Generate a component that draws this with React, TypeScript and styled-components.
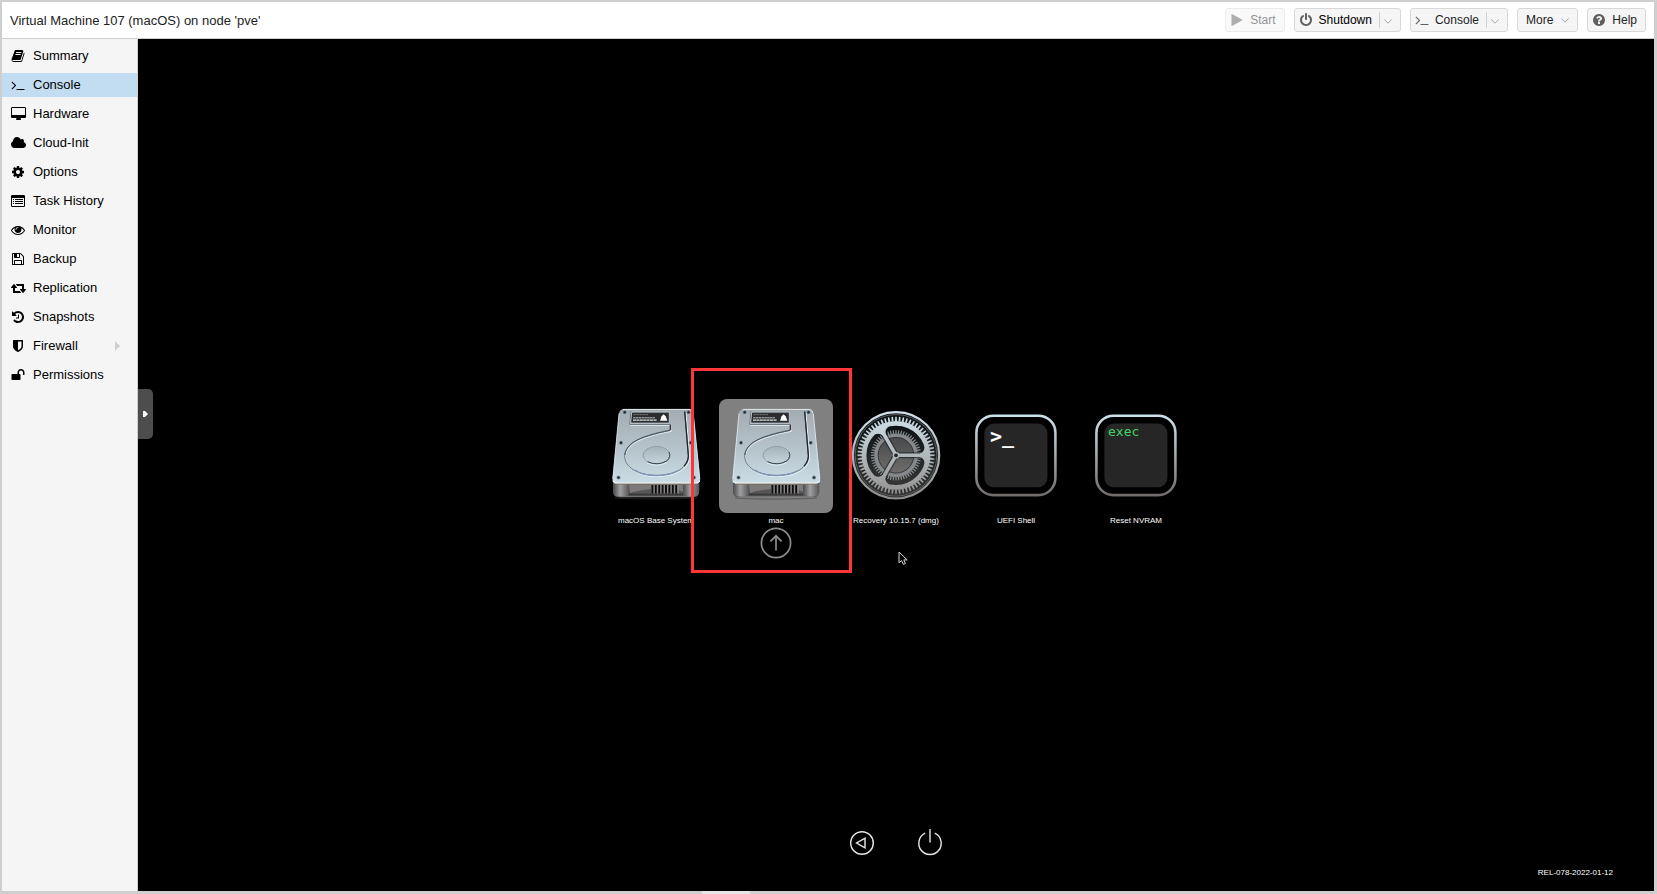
import React from "react";
import styled, { createGlobalStyle, css } from "styled-components";

const GlobalStyle = createGlobalStyle`
  *, *::before, *::after { box-sizing: border-box; }
  body {
    margin: 0;
    background: #cfcfcf;
    font-family: "Liberation Sans", Arial, Helvetica, sans-serif;
    font-size: 13px;
    color: #000;
  }
  button { font: inherit; color: inherit; margin: 0; padding: 0; border: 0; background: none; cursor: pointer; }
  svg { display: block; flex: none; }
`;

/* ---------- icon glyphs, drawn on a 1792 unit grid ---------- */

type GlyphDef = { w?: number; d: string };

const glyphs = {
  book: {
    d: "M1703 478q40 57 18 129l-275 906q-19 64-76.5 107.5t-122.5 43.5h-923q-77 0-148.5-53.5t-99.5-131.5q-24-67-2-127 0-4 3-27t4-37q1-8-3-21.5t-3-19.5q2-11 8-21t16.5-23.5 16.5-23.5q23-38 45-91.5t30-91.5q3-10 .5-30t-.5-28q3-11 17-28t17-23q21-36 42-92t25-90q1-9-2.5-32t.5-28q4-13 22-30.5t22-22.5q19-26 42.5-84.5t27.5-96.5q1-8-3-25.5t-2-26.5q2-8 9-18t18-23 17-21q8-12 16.5-30.5t15-35 16-36 19.5-32 26.5-23.5 36-11.5 47.5 5.5l-1 3q38-9 51-9h761q74 0 114 56t18 130l-274 906q-36 119-71.5 153.5t-128.5 34.5h-869q-27 0-38 15-11 16-1 43 24 70 144 70h923q29 0 56-15.5t35-41.5l300-987q7-22 5-57 38 15 59 43zm-1064 2q-4 13 2 22.5t20 9.5h608q13 0 25.5-9.5t16.5-22.5l21-64q4-13-2-22.5t-20-9.5h-608q-13 0-25.5 9.5t-16.5 22.5zm-83 256q-4 13 2 22.5t20 9.5h608q13 0 25.5-9.5t16.5-22.5l21-64q4-13-2-22.5t-20-9.5h-608q-13 0-25.5 9.5t-16.5 22.5z",
  },
  terminal: {
    d: "M649 983l-466 466q-10 10-23 10t-23-10l-50-50q-10-10-10-23t10-23l393-393-393-393q-10-10-10-23t10-23l50-50q10-10 23-10t23 10l466 466q10 10 10 23t-10 23zm1079 457v64q0 14-9 23t-23 9h-960q-14 0-23-9t-9-23v-64q0-14 9-23t23-9h960q14 0 23 9t9 23z",
  },
  desktop: {
    w: 1920,
    d: "M1792 992v-832q0-13-9.5-22.5t-22.5-9.5h-1600q-13 0-22.5 9.5t-9.5 22.5v832q0 13 9.5 22.5t22.5 9.5h1600q13 0 22.5-9.5t9.5-22.5zm128-832v1088q0 66-47 113t-113 47h-544q0 37 16 77.5t32 71 16 43.5q0 26-19 45t-45 19h-512q-26 0-45-19t-19-45q0-14 16-44t32-70 16-78h-544q-66 0-113-47t-47-113v-1088q0-66 47-113t113-47h1600q66 0 113 47t47 113z",
  },
  cloud: {
    w: 1920,
    d: "M1920 1152q0 159-112.5 271.5t-271.5 112.5h-1088q-185 0-316.5-131.5t-131.5-316.5q0-132 71-241.5t187-163.5q-2-28-2-43 0-212 150-362t362-150q158 0 286.5 88t187.5 230q70-62 166-62 106 0 181 75t75 181q0 75-41 138 129 30 213 134.5t84 239.5z",
  },
  cog: {
    d: "M1152 896q0-106-75-181t-181-75-181 75-75 181 75 181 181 75 181-75 75-181zm512-109v222q0 12-8 23t-20 13l-185 28q-19 54-39 91 35 50 107 138 10 12 10 25t-9 23q-27 37-99 108t-94 71q-12 0-26-9l-138-108q-44 23-91 38-16 136-29 186-7 28-36 28h-222q-14 0-24.5-8.5t-11.5-21.5l-28-184q-49-16-90-37l-141 107q-10 9-25 9-14 0-25-11-126-114-165-168-7-10-7-23 0-12 8-23 15-21 51-66.5t54-70.5q-27-50-41-99l-183-27q-13-2-21-12.5t-8-23.5v-222q0-12 8-23t19-13l186-28q14-46 39-92-40-57-107-138-10-12-10-24 0-10 9-23 26-36 98.5-107.5t94.5-71.5q13 0 26 10l138 107q44-23 91-38 16-136 29-186 7-28 36-28h222q14 0 24.5 8.5t11.5 21.5l28 184q49 16 90 37l142-107q9-9 24-9 13 0 25 10 129 119 165 170 7 8 7 22 0 12-8 23-15 21-51 66.5t-54 70.5q26 50 41 98l183 28q13 2 21 12.5t8 23.5z",
  },
  list: {
    d: "M160 128h1472q160 0 160 160v1216q0 160-160 160h-1472q-160 0-160-160v-1216q0-160 160-160zm0 384q-32 0-32 32v960q0 32 32 32h1472q32 0 32-32v-960q0-32-32-32zM256 640h128v128h-128zM512 640h1024v128h-1024zM256 896h128v128h-128zM512 896h1024v128h-1024zM256 1152h128v128h-128zM512 1152h1024v128h-1024z",
  },
  eye: {
    d: "M1664 960q-152-236-381-353 61 104 61 225 0 185-131.5 316.5t-316.5 131.5-316.5-131.5-131.5-316.5q0-121 61-225-229 117-381 353 133 205 333.5 326.5t434.5 121.5 434.5-121.5 333.5-326.5zm-720-384q0-20-14-34t-34-14q-125 0-214.5 89.5t-89.5 214.5q0 20 14 34t34 14 34-14 14-34q0-86 61-147t147-61q20 0 34-14t14-34zm848 384q0 34-20 69-140 230-376.5 368.5t-499.5 138.5-499.5-139-376.5-368q-20-35-20-69t20-69q140-229 376.5-368t499.5-139 499.5 139 376.5 368q20 35 20 69z",
  },
  floppy: {
    d: "M512 1536h768v-384h-768v384zm896 0h128v-896q0-14-10-38.5t-20-34.5l-281-281q-10-10-34-20t-39-10v416q0 40-28 68t-68 28h-576q-40 0-68-28t-28-68v-416h-128v1280h128v-416q0-40 28-68t68-28h832q40 0 68 28t28 68v416zm-384-928v-320q0-13-9.5-22.5t-22.5-9.5h-192q-13 0-22.5 9.5t-9.5 22.5v320q0 13 9.5 22.5t22.5 9.5h192q13 0 22.5-9.5t9.5-22.5zm640 32v928q0 40-28 68t-68 28h-1344q-40 0-68-28t-28-68v-1344q0-40 28-68t68-28h928q40 0 88 20t76 48l280 280q28 28 48 76t20 88z",
  },
  retweet: {
    w: 1920,
    d: "M1280 1504q0 13-9.5 22.5t-22.5 9.5h-960q-8 0-13.5-2t-9-7-5.5-8-3-11.5-1-11.5v-600h-192q-26 0-45-19t-19-45q0-24 15-41l320-384q19-22 49-22t49 22l320 384q15 17 15 41 0 26-19 45t-45 19h-192v384h576q16 0 25 11l160 192q7 10 7 21zm640-416q0 24-15 41l-320 384q-20 23-49 23t-49-23l-320-384q-15-17-15-41 0-26 19-45t45-19h192v-384h-576q-16 0-25-12l-160-192q-7-9-7-20 0-13 9.5-22.5t22.5-9.5h960q8 0 13.5 2t9 7 5.5 8 3 11.5 1 11.5v600h192q26 0 45 19t19 45z",
  },
  history: {
    d: "M1664 896q0 156-61 298t-164 245-245 164-298 61q-172 0-327-72.5t-264-204.5q-7-10-6.5-22.5t8.5-20.5l137-138q10-9 25-9 16 2 23 12 73 95 179 147t225 52q104 0 198.5-40.5t163.5-109.5 109.5-163.5 40.5-198.5-40.5-198.5-109.5-163.5-163.5-109.5-198.5-40.5q-98 0-188 35.5t-160 101.5l137 138q31 30 14 69-17 40-59 40h-448q-26 0-45-19t-19-45v-448q0-42 40-59 39-17 69 14l130 129q107-101 244.5-156.5t284.5-55.5q156 0 298 61t245 164 164 245 61 298zm-640-288v448q0 14-9 23t-23 9h-320q-14 0-23-9t-9-23v-64q0-14 9-23t23-9h224v-352q0-14 9-23t23-9h64q14 0 23 9t9 23z",
  },
  shield: {
    d: "M1344 960v-640h-448v1137q119-63 213-137 235-184 235-360zm192-768v768q0 86-33.5 170.5t-83 150-118 127.5-126.5 103-121 77.5-89.5 49.5-42.5 20q-12 6-26 6t-26-6q-16-7-42.5-20t-89.5-49.5-121-77.5-126.5-103-118-127.5-83-150-33.5-170.5v-768q0-26 19-45t45-19h1152q26 0 45 19t19 45z",
  },
  unlock: {
    d: "M1728 576v256q0 26-19 45t-45 19h-64q-26 0-45-19t-19-45v-256q0-106-75-181t-181-75-181 75-75 181v192h96q40 0 68 28t28 68v576q0 40-28 68t-68 28h-960q-40 0-68-28t-28-68v-576q0-40 28-68t68-28h672v-192q0-185 131.5-316.5t316.5-131.5 316.5 131.5 131.5 316.5z",
  },
  power: {
    d: "M1664 896q0 156-61 298t-164 245-245 164-298 61-298-61-245-164-164-245-61-298q0-182 80.5-343t226.5-270q43-32 95.5-25t83.5 50q32 42 24.5 94.5t-49.5 84.5q-98 74-151.5 181t-53.5 228q0 104 40.5 198.5t109.5 163.5 163.5 109.5 198.5 40.5 198.5-40.5 163.5-109.5 109.5-163.5 40.5-198.5q0-121-53.5-228t-151.5-181q-42-32-49.5-84.5t24.5-94.5q31-43 84-50t95 25q146 109 226.5 270t80.5 343zm-640-768v640q0 52-38 90t-90 38-90-38-38-90v-640q0-52 38-90t90-38 90 38 38 90z",
  },
  play: {
    d: "M1576 927l-1328 738q-23 13-39.5 3t-16.5-36v-1472q0-26 16.5-36t39.5 3l1328 738q23 13 23 31t-23 31z",
  },
  question: {
    d: "M1024 1376v-192q0-14-9-23t-23-9h-192q-14 0-23 9t-9 23v192q0 14 9 23t23 9h192q14 0 23-9t9-23zm256-672q0-88-55.5-163t-138.5-116-170-41q-243 0-371 213-15 24 8 42l132 100q7 6 19 6 16 0 25-12 53-68 86-92 34-24 86-24 48 0 85.5 26t37.5 59q0 38-20 61t-68 45q-63 28-115.5 86.5t-52.5 125.5v36q0 14 9 23t23 9h192q14 0 23-9t9-23q0-19 21.5-49.5t54.5-49.5q32-18 49-28.5t46-35 44.5-48 28-60.5 12.5-81zm384 192q0 209-103 385.5t-279.5 279.5-385.5 103-385.5-103-279.5-279.5-103-385.5 103-385.5 279.5-279.5 385.5-103 385.5 103 279.5 279.5 103 385.5z",
  },
} satisfies Record<string, GlyphDef>;

type GlyphName = keyof typeof glyphs;

function Glyph({ name }: { name: GlyphName }) {
  const g: GlyphDef = glyphs[name];
  const w = g.w ?? 1792;
  return (
    <svg width={w / 128} height={14} viewBox={`0 0 ${w} 1792`} aria-hidden="true">
      <path d={g.d} fill="currentColor" fillRule="evenodd" />
    </svg>
  );
}

function Chevron() {
  return (
    <svg width="8" height="5" viewBox="0 0 8 5" aria-hidden="true">
      <path d="M0.3 0.4 4 4.2 7.7 0.4" fill="none" stroke="#a8a8a8" strokeWidth="1" />
    </svg>
  );
}

/* ---------- page frame ---------- */

const Frame = styled.div`
  display: flex;
  flex-direction: column;
  min-height: 100vh;
  padding: 2px 3px 0 2px;
  background: #cfcfcf;
`;

const Header = styled.header`
  display: flex;
  align-items: center;
  justify-content: space-between;
  height: 37px;
  padding: 0 8px;
  background: #fff;
  border-bottom: 1px solid #cfcfcf;
`;

const Title = styled.h1`
  margin: 0;
  font-size: 13px;
  font-weight: 400;
  line-height: 18px;
  padding-top: 1px;
  color: #222;
`;

const Toolbar = styled.div`
  display: flex;
  gap: 9px;
`;

const boxed = css`
  height: 24px;
  background: #f5f5f5;
  border: 1px solid #d8d8d8;
  border-radius: 3px;
  font-size: 12px;
  line-height: 14px;
  color: #222;
`;

const ToolButton = styled.button<{ $plain?: boolean }>`
  ${boxed}
  display: flex;
  align-items: center;
  gap: ${(p) => (p.$plain ? 8 : 6)}px;
  padding: ${(p) => (p.$plain ? "0 8px" : "0 8px 0 4px")};
  &:disabled { opacity: 0.5; cursor: default; }
`;

const SplitButton = styled.div`
  ${boxed}
  display: flex;
`;

const SplitMain = styled.button<{ $strong?: boolean }>`
  display: flex;
  align-items: center;
  gap: 6px;
  padding: 0 7px 0 4px;
  color: ${(p) => (p.$strong ? "#000" : "#222")};
`;

const SplitArrow = styled.button`
  display: flex;
  align-items: center;
  width: 21px;
  padding: 2px 0 0 5px;
  position: relative;
  &::before {
    content: "";
    position: absolute;
    left: 0;
    top: 3px;
    bottom: 3px;
    width: 1px;
    background: #d0d0d0;
  }
`;

const ButtonIcon = styled.span`
  display: flex;
  justify-content: center;
  width: 14px;
  color: #606060;
`;

/* ---------- side menu ---------- */

const Body = styled.div`
  display: flex;
  flex: 1;
`;

const SideMenu = styled.nav`
  flex: none;
  display: flex;
  flex-direction: column;
  gap: 5px;
  width: 136px;
  padding-top: 5px;
  background: #f5f5f5;
  border-right: 1px solid #cfcfcf;
`;

const MenuLink = styled.a<{ $active?: boolean }>`
  display: flex;
  align-items: center;
  gap: 7px;
  height: 24px;
  padding: 0 17px 0 8px;
  font-size: 13px;
  line-height: 16px;
  color: #000;
  text-decoration: none;
  background: ${(p) => (p.$active ? "#c2ddf2" : "transparent")};
`;

const MenuIcon = styled.span`
  display: flex;
  justify-content: center;
  width: 16px;
`;

const SubmenuMark = styled.span`
  margin-left: auto;
  border: 5px solid transparent;
  border-left-color: #cfcfcf;
  border-right-width: 0;
`;

const Strip = styled.div`
  display: flex;
  height: 3px;
  padding-left: 700px;
`;

const StripGrip = styled.span`
  width: 48px;
  background: #e6e6e6;
`;

/* ---------- VM screen ---------- */

const Screen = styled.main`
  position: relative;
  flex: 1;
  display: grid;
  grid-template-rows: 1fr auto 1fr;
  background: #000;
  color: #fff;
`;

const Handle = styled.button`
  position: absolute;
  left: 0;
  top: 350px;
  width: 15px;
  height: 50px;
  display: flex;
  align-items: center;
  justify-content: center;
  background: #4d4d4d;
  border-radius: 0 5px 5px 0;
`;

const Picker = styled.div`
  grid-row: 2;
  display: flex;
  justify-content: center;
`;

const Entry = styled.div`
  position: relative;
  width: 120px;
`;

const EntryButton = styled.button`
  display: flex;
  flex-direction: column;
  align-items: center;
  width: 120px;
  padding-bottom: 2px;
`;

const Tile = styled.span<{ $selected?: boolean }>`
  width: 114px;
  height: 114px;
  border-radius: 8px;
  background: ${(p) => (p.$selected ? "#808080" : "transparent")};
`;

const EntryLabel = styled.span`
  font-size: 8px;
  line-height: 16px;
  white-space: nowrap;
`;

const BootNow = styled.button`
  position: absolute;
  left: 44px;
  top: 128px;
`;

const Highlight = styled.span`
  position: absolute;
  left: -25px;
  top: -31px;
  width: 161px;
  height: 205px;
  border: 3px solid #fe3637;
  z-index: 1;
  pointer-events: none;
`;

const Pointer = styled.span`
  position: absolute;
  left: 62px;
  top: 152px;
`;

const ScreenFooter = styled.div`
  grid-row: 3;
  align-self: end;
  display: grid;
  grid-template-columns: 1fr auto 1fr;
`;

const Controls = styled.div`
  grid-column: 2;
  display: flex;
  gap: 42px;
  padding-bottom: 34px;
`;

const Version = styled.span`
  align-self: end;
  justify-self: end;
  padding: 0 41px 13px 0;
  font-size: 8px;
  line-height: 10px;
`;

/* ---------- boot entry drawings ---------- */

function DiskArt({ id }: { id: string }) {
  const g = (n: string) => `${id}-${n}`;
  const u = (n: string) => `url(#${id}-${n})`;
  const screws = [[25.7, 13.3], [89.5, 13.3], [22, 43.7], [91.7, 43.7], [19.5, 78.6], [95, 78.6]];
  return (
    <svg width="114" height="114" viewBox="0 0 114 114" aria-hidden="true">
      <defs>
        <linearGradient id={g("plate")} x1="0" y1="0" x2="0" y2="1">
          <stop offset="0" stopColor="#a3abb0" />
          <stop offset="0.5" stopColor="#b4c2ca" />
          <stop offset="1" stopColor="#cbdde6" />
        </linearGradient>
        <linearGradient id={g("post")} x1="0" y1="0" x2="1" y2="0">
          <stop offset="0" stopColor="#4c4c4e" />
          <stop offset="0.45" stopColor="#a0a0a2" />
          <stop offset="1" stopColor="#5a5a5c" />
        </linearGradient>
        <linearGradient id={g("hub")} x1="0" y1="0" x2="0" y2="1">
          <stop offset="0" stopColor="#a4b1b8" />
          <stop offset="1" stopColor="#c6d6de" />
        </linearGradient>
      </defs>
      <path d="M16 99Q57 101 98 99" stroke="#3a3a3a" strokeWidth="1.6" opacity="0.4" fill="none" />
      <path d="M14 84H100.3V93Q100 98 95 98H19Q14.3 98 14 93Z" fill="#575656" />
      <path d="M30 85.5H52V90Q40 91 31 94Z" fill="#7d7a79" />
      <path d="M80 85.5H84V93L80 91Z" fill="#7d7a79" />
      <path d="M52 85.5H80V95H52Z" fill="#8a8786" />
      <path d="M30 95.4H84" stroke="#3d3c3c" strokeWidth="2" />
      {[0, 1, 2, 3, 4, 5, 6, 7].map((i) => (
        <path key={i} d={`M${53.4 + i * 3.4} 86v8.6`} stroke="#0c0c0c" strokeWidth="1.9" />
      ))}
      <path d="M14.4 85H29.6V93.5Q29 97.4 24 97.6H20Q15 97.2 14.4 93.5Z" fill={u("post")} />
      <path d="M84 85H99.8V93.5Q99.2 97.4 94.4 97.6H90Q84.8 97.2 84 93.5Z" fill={u("post")} />
      <path d="M20 97.8H94.6" stroke="#8a8887" strokeWidth="0.8" />
      <path
        d="M25 10H89.5Q93.6 10 94.3 14.5L101 79.5Q101.4 84.6 96.5 84.8H18Q13 84.6 13.6 79.5L20 14.5Q20.8 10 25 10Z"
        fill={u("plate")}
      />
      <path d="M24 10.4H90.5Q93.3 10.7 94 14.5" stroke="#e6edf0" strokeWidth="0.9" fill="none" />
      <path d="M20 14.5L13.8 80" stroke="#e2eef4" strokeWidth="0.8" fill="none" />
      <path d="M94.3 15L100.8 80" stroke="#dce8ee" strokeWidth="0.9" fill="none" />
      <path d="M14 81.6Q14.8 83.9 18 84H96.5Q100 83.9 100.7 81.6" stroke="#eef7fb" strokeWidth="1.2" fill="none" />
      <path d="M17 85.2H98" stroke="#8a7355" strokeWidth="0.8" />
      {/* raised motor housing */}
      <path
        d="M32 12.5L30.8 25.4H71.6V31.5C50 35.5 26 42 25.7 57C25.8 68.5 39 76.8 57.3 76.8C76 76.8 90 68.5 90 57L86.2 12.5"
        fill="none"
        stroke="#e4eff5"
        strokeWidth="1"
        transform="translate(0.7 0.9)"
      />
      <path
        d="M32 12.5L30.8 25.4H71.6V31C50 35 26 42 25.7 57C25.8 68.5 39 76.3 57.3 76.3C76 76.3 89.6 68.5 89.4 57L85.7 12.5"
        fill="none"
        stroke="#66717a"
        strokeWidth="1"
      />
      <path d="M85.7 12.5L89.4 57Q89 63 85 67" fill="none" stroke="#22272b" strokeWidth="1.3" />
      <path d="M71.4 26V31" stroke="#3c3334" strokeWidth="1.5" />
      <path d="M71 31.4C56 34.6 41 38.4 34 43.4Q26.4 49 25.8 56" fill="none" stroke="#454e54" strokeWidth="0.9" />
      <path d="M36 71Q43 76.4 57.3 76.6Q70 76.4 78 72" fill="none" stroke="#7c96ba" strokeWidth="1.2" />
      <ellipse cx="57.5" cy="56.2" rx="13.4" ry="8.8" fill={u("hub")} stroke="#8d9aa2" strokeWidth="0.9" />
      <path d="M70 53Q72.4 58 67.6 62Q58 67.2 48.5 62.6" fill="none" stroke="#3b444a" strokeWidth="1" />
      <path d="M48 64Q58 68.4 67 64" fill="none" stroke="#e6f1f6" strokeWidth="0.8" />
      {/* label plate */}
      <path d="M32.7 13.2H70.2V24H31.8Z" fill="#2b2d2f" stroke="#dbe4e9" strokeWidth="0.6" />
      <path d="M34.5 15.6H49" stroke="#85898c" strokeWidth="0.8" strokeDasharray="2.4 0.6" />
      <path d="M34.2 18.8H56" stroke="#c4c8ca" strokeWidth="1" strokeDasharray="2.4 0.4" />
      <path d="M34 21.2H58" stroke="#e4e6e8" strokeWidth="1.2" strokeDasharray="3 0.4" />
      <path d="M64.6 15.2L66.6 17.2L68.4 21.8H61L62.6 17.2Z" fill="#fff" />
      {screws.map(([x, y]) => (
        <g key={`${x}-${y}`}>
          <circle cx={x} cy={y} r="2" fill="#7e8b93" />
          <circle cx={x} cy={y} r="1.2" fill="#1e2c38" />
        </g>
      ))}
    </svg>
  );
}

const C = 57;
const CY = 56.3;

function teeth(count: number, inner: number, outer: number, fill: number) {
  let d = "";
  for (let i = 0; i < count; i++) {
    const a = (i / count) * Math.PI * 2;
    const h = (Math.PI / count) * fill;
    const p = (r: number, t: number) => `${(C + r * Math.cos(t)).toFixed(2)} ${(CY + r * Math.sin(t)).toFixed(2)}`;
    d += `M${p(inner, a - h)}L${p(outer, a - h * 0.6)}L${p(outer, a + h * 0.6)}L${p(inner, a + h)}Z`;
  }
  return d;
}

/* One arm per angle, flared where it meets the outer ring. */
function arms(half: number) {
  return [0, 120, 240]
    .map((deg) => {
      const t = (deg * Math.PI) / 180;
      const q = (x: number, y: number) =>
        `${(C + x * Math.cos(t) - y * Math.sin(t)).toFixed(2)} ${(CY + x * Math.sin(t) + y * Math.cos(t)).toFixed(2)}`;
      return `M${q(0, -half)}L${q(23.5, -half)}Q${q(28, -half - 1)} ${q(28.6, -8)}L${q(31.5, -8)}L${q(31.5, 8)}L${q(28.6, 8)}Q${q(28, half + 1)} ${q(23.5, half)}L${q(0, half)}Z`;
    })
    .join("");
}

function GearArt() {
  return (
    <svg width="114" height="114" viewBox="0 0 114 114" aria-hidden="true">
      <defs>
        <linearGradient id="gear-metal" gradientUnits="userSpaceOnUse" x1="0" y1="12" x2="0" y2="101">
          <stop offset="0" stopColor="#d3e6ee" />
          <stop offset="0.45" stopColor="#b4bcc0" />
          <stop offset="1" stopColor="#8e8c8b" />
        </linearGradient>
        <linearGradient id="gear-dark" x1="0" y1="0" x2="0" y2="1">
          <stop offset="0" stopColor="#0c1215" />
          <stop offset="1" stopColor="#363534" />
        </linearGradient>
        <linearGradient id="gear-disc" x1="0" y1="0" x2="0" y2="1">
          <stop offset="0" stopColor="#454849" />
          <stop offset="1" stopColor="#716f6d" />
        </linearGradient>
      </defs>
      <circle cx={C} cy={CY} r="43.2" fill="url(#gear-dark)" stroke="url(#gear-metal)" strokeWidth="2.2" />
      <circle cx={C} cy={CY} r="40.8" fill="none" stroke="#565c5f" strokeWidth="1" />
      <path d={teeth(64, 34, 38.6, 0.62)} fill="url(#gear-metal)" />
      <circle cx={C} cy={CY} r="30" fill="url(#gear-dark)" />
      <path d={teeth(56, 21.5, 25.2, 0.6)} fill="#8b9092" />
      <circle cx={C} cy={CY} r="20" fill="url(#gear-disc)" stroke="#85898b" strokeWidth="3.6" />
      <circle cx={C} cy={CY} r="17.8" fill="none" stroke="#2c2d2e" strokeWidth="0.8" />
      <path d={arms(3)} fill="#15181a" opacity="0.6" />
      <circle cx={C} cy={CY} r="32" fill="none" stroke="url(#gear-metal)" strokeWidth="4.8" />
      <path d={arms(1.8)} fill="url(#gear-metal)" />
      <circle cx={C} cy={CY} r="3.4" fill="url(#gear-metal)" />
      <circle cx={C} cy={CY} r="1.9" fill="#25292b" />
    </svg>
  );
}

function ToolArt({ id, children }: { id: string; children: React.ReactNode }) {
  return (
    <svg width="114" height="114" viewBox="0 0 114 114" aria-hidden="true">
      <defs>
        <linearGradient id={id} gradientUnits="userSpaceOnUse" x1="0" y1="15" x2="0" y2="98">
          <stop offset="0" stopColor="#cde3ec" />
          <stop offset="0.5" stopColor="#a2a8aa" />
          <stop offset="1" stopColor="#6e6a68" />
        </linearGradient>
      </defs>
      <rect x="17.4" y="16.7" width="79" height="79.4" rx="17" fill="none" stroke={`url(#${id})`} strokeWidth="2.6" />
      <rect x="25.4" y="24.6" width="63" height="63.6" rx="9.5" fill="#262626" />
      {children}
    </svg>
  );
}

/* ---------- data ---------- */

const menu: { icon: GlyphName; label: string; active?: boolean; submenu?: boolean }[] = [
  { icon: "book", label: "Summary" },
  { icon: "terminal", label: "Console", active: true },
  { icon: "desktop", label: "Hardware" },
  { icon: "cloud", label: "Cloud-Init" },
  { icon: "cog", label: "Options" },
  { icon: "list", label: "Task History" },
  { icon: "eye", label: "Monitor" },
  { icon: "floppy", label: "Backup" },
  { icon: "retweet", label: "Replication" },
  { icon: "history", label: "Snapshots" },
  { icon: "shield", label: "Firewall", submenu: true },
  { icon: "unlock", label: "Permissions" },
];

function BootEntry(props: { label: string; selected?: boolean; art: React.ReactNode; children?: React.ReactNode }) {
  return (
    <Entry>
      <EntryButton type="button">
        <Tile $selected={props.selected}>{props.art}</Tile>
        <EntryLabel>{props.label}</EntryLabel>
      </EntryButton>
      {props.children}
    </Entry>
  );
}

export default function App() {
  return (
    <>
      <GlobalStyle />
      <Frame>
        <Header>
          <Title>Virtual Machine 107 (macOS) on node 'pve'</Title>
          <Toolbar>
            <ToolButton type="button" disabled>
              <ButtonIcon><Glyph name="play" /></ButtonIcon>
              Start
            </ToolButton>
            <SplitButton>
              <SplitMain type="button" $strong>
                <ButtonIcon><Glyph name="power" /></ButtonIcon>
                Shutdown
              </SplitMain>
              <SplitArrow type="button" aria-label="Shutdown options"><Chevron /></SplitArrow>
            </SplitButton>
            <SplitButton>
              <SplitMain type="button">
                <ButtonIcon><Glyph name="terminal" /></ButtonIcon>
                Console
              </SplitMain>
              <SplitArrow type="button" aria-label="Console options"><Chevron /></SplitArrow>
            </SplitButton>
            <ToolButton type="button" $plain>
              More
              <Chevron />
            </ToolButton>
            <ToolButton type="button">
              <ButtonIcon><Glyph name="question" /></ButtonIcon>
              Help
            </ToolButton>
          </Toolbar>
        </Header>
        <Body>
          <SideMenu aria-label="Virtual machine">
            {menu.map((m) => (
              <MenuLink key={m.label} href="#" $active={m.active} aria-current={m.active ? "page" : undefined}>
                <MenuIcon><Glyph name={m.icon} /></MenuIcon>
                {m.label}
                {m.submenu && <SubmenuMark />}
              </MenuLink>
            ))}
          </SideMenu>
          <Screen>
            <Handle type="button" aria-label="Show control bar">
              <svg width="5" height="6" viewBox="0 0 5 6" aria-hidden="true">
                <path d="M0 0H2L5 3 2 6H0Z" fill="#fff" />
              </svg>
            </Handle>
            <Picker>
              <BootEntry label="macOS Base System" art={<DiskArt id="disk-a" />} />
              <BootEntry label="mac" selected art={<DiskArt id="disk-b" />}>
                <BootNow type="button" aria-label="Boot mac">
                  <svg width="32" height="32" viewBox="0 0 32 32" fill="none" stroke="#8c8c8c" strokeWidth="1.7" aria-hidden="true">
                    <circle cx="16" cy="16" r="14.6" />
                    <path d="M16 23.6V9M10.4 14.4L16 8.8L21.6 14.4" />
                  </svg>
                </BootNow>
                <Highlight />
              </BootEntry>
              <BootEntry label="Recovery 10.15.7 (dmg)" art={<GearArt />}>
                <Pointer>
                  <svg width="11" height="15" viewBox="0 0 11 15" aria-hidden="true">
                    <path d="M1 1V11.8L3.6 9.6L5.4 13.4L7.4 12.5L5.8 8.9H9.2Z" fill="#000" stroke="#d6d6d6" strokeWidth="1" />
                  </svg>
                </Pointer>
              </BootEntry>
              <BootEntry
                label="UEFI Shell"
                art={
                  <ToolArt id="shell-rim">
                    <text x="31" y="44" fontFamily="'DejaVu Sans Mono', monospace" fontSize="20" fontWeight="700" fill="#fff">&gt;_</text>
                  </ToolArt>
                }
              />
              <BootEntry
                label="Reset NVRAM"
                art={
                  <ToolArt id="reset-rim">
                    <text x="29" y="37" fontFamily="'DejaVu Sans Mono', monospace" fontSize="13" fill="#43d564">exec</text>
                  </ToolArt>
                }
              />
            </Picker>
            <ScreenFooter>
              <Controls>
                <button type="button" aria-label="Restart">
                  <svg width="26" height="28" viewBox="0 0 26 28" fill="none" stroke="#e8e8e8" strokeWidth="1.4" aria-hidden="true">
                    <circle cx="13" cy="14" r="11.3" />
                    <path d="M16 9.2V18.8L7.6 14Z" />
                  </svg>
                </button>
                <button type="button" aria-label="Power off">
                  <svg width="26" height="28" viewBox="0 0 26 28" fill="none" stroke="#e8e8e8" strokeWidth="1.4" aria-hidden="true">
                    <path d="M8.2 4.2A11.2 11.2 0 1 0 17.8 4.2" />
                    <path d="M13 0V13.6" />
                  </svg>
                </button>
              </Controls>
              <Version>REL-078-2022-01-12</Version>
            </ScreenFooter>
          </Screen>
        </Body>
        <Strip>
          <StripGrip />
        </Strip>
      </Frame>
    </>
  );
}
